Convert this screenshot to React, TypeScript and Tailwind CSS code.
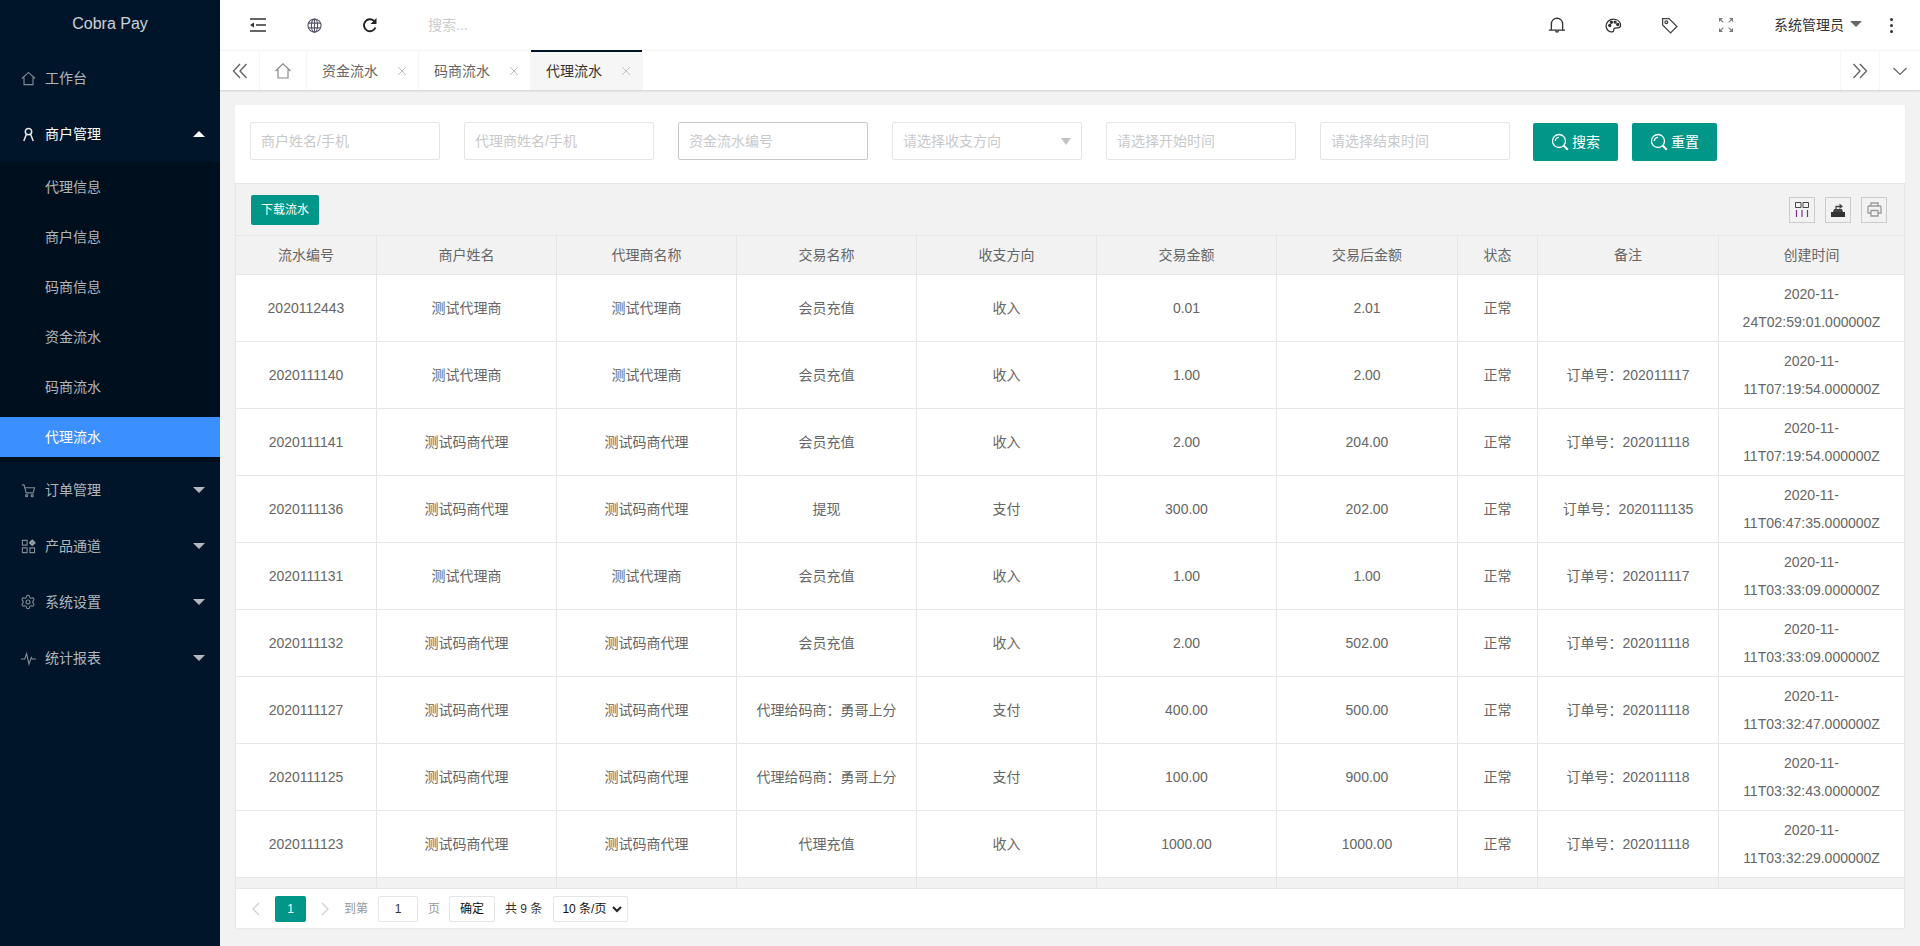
import React from 'react';
import { Settings } from 'lucide-react';

const subMenus = ['代理信息', '商户信息', '码商信息', '资金流水', '码商流水', '代理流水'];

const columns = [
  { title: '流水编号', width: 'w-[141px]' },
  { title: '商户姓名', width: 'w-[180px]' },
  { title: '代理商名称', width: 'w-[180px]' },
  { title: '交易名称', width: 'w-[180px]' },
  { title: '收支方向', width: 'w-[180px]' },
  { title: '交易金额', width: 'w-[180px]' },
  { title: '交易后金额', width: 'w-[181px]' },
  { title: '状态', width: 'w-[80px]' },
  { title: '备注', width: 'w-[181px]' },
  { title: '创建时间', width: 'w-[185px]' },
];

const rows = [
  ['2020112443', '测试代理商', '测试代理商', '会员充值', '收入', '0.01', '2.01', '正常', '', '2020-11-24T02:59:01.000000Z'],
  ['2020111140', '测试代理商', '测试代理商', '会员充值', '收入', '1.00', '2.00', '正常', '订单号：202011117', '2020-11-11T07:19:54.000000Z'],
  ['2020111141', '测试码商代理', '测试码商代理', '会员充值', '收入', '2.00', '204.00', '正常', '订单号：202011118', '2020-11-11T07:19:54.000000Z'],
  ['2020111136', '测试码商代理', '测试码商代理', '提现', '支付', '300.00', '202.00', '正常', '订单号：2020111135', '2020-11-11T06:47:35.000000Z'],
  ['2020111131', '测试代理商', '测试代理商', '会员充值', '收入', '1.00', '1.00', '正常', '订单号：202011117', '2020-11-11T03:33:09.000000Z'],
  ['2020111132', '测试码商代理', '测试码商代理', '会员充值', '收入', '2.00', '502.00', '正常', '订单号：202011118', '2020-11-11T03:33:09.000000Z'],
  ['2020111127', '测试码商代理', '测试码商代理', '代理给码商：勇哥上分', '支付', '400.00', '500.00', '正常', '订单号：202011118', '2020-11-11T03:32:47.000000Z'],
  ['2020111125', '测试码商代理', '测试码商代理', '代理给码商：勇哥上分', '支付', '100.00', '900.00', '正常', '订单号：202011118', '2020-11-11T03:32:43.000000Z'],
  ['2020111123', '测试码商代理', '测试码商代理', '代理充值', '收入', '1000.00', '1000.00', '正常', '订单号：202011118', '2020-11-11T03:32:29.000000Z'],
];

const Caret: React.FC<{ up?: boolean }> = ({ up }) =>
  up ? (
    <span className="h-0 w-0 border-x-[6px] border-b-[6px] border-x-transparent border-b-white" />
  ) : (
    <span className="h-0 w-0 border-x-[6px] border-t-[6px] border-x-transparent border-t-[#b3b9bf]" />
  );

const Icon: React.FC<{ size?: number; children: React.ReactNode; className?: string }> = ({ size = 16, children, className }) => (
  <svg width={size} height={size} viewBox="0 0 16 16" fill="none" stroke="currentColor" strokeWidth="1.2" className={className}>
    {children}
  </svg>
);

const menuIcons: Record<string, React.ReactNode> = {
  工作台: <Icon size={15}><path d="M1 8 8 1.500 15 8M3.200 7v7.500h9.600V7" /></Icon>,
  商户管理: <Icon size={15}><path d="M8 1.500a3.400 3.400 0 1 1 0 6.800 3.400 3.400 0 0 1 0-6.800ZM5.600 8 3 15M10.400 8 13 15" strokeWidth="1.600" /></Icon>,
  订单管理: (
    <Icon size={15}>
      <path d="M1 2h2.200L5.500 10.500h7.500L14.500 5H4" />
      <circle cx="6" cy="13.500" r="1.100" />
      <circle cx="12" cy="13.500" r="1.100" />
    </Icon>
  ),
  产品通道: (
    <Icon size={15}>
      <path d="M1.500 1.500h5v5h-5zM1.500 9.500h5v5h-5zM9.500 9.500h5v5h-5z" />
      <path d="M12 1 15 4 12 7 9 4Z" fill="currentColor" />
    </Icon>
  ),
  系统设置: <Settings size={16} strokeWidth={1.6} />,
  统计报表: <Icon size={15}><path d="M0 8.500h4L6 3l2.500 11L11 7l1 1.500h4" /></Icon>,
};

const MenuItem: React.FC<{ name: string; open?: boolean; arrow?: boolean }> = ({ name, open, arrow = true }) => (
  <div className={`flex h-[56px] items-center pl-[20px] pr-[15px] text-sm ${open ? 'text-white' : 'text-white/70'}`}>
    <span className={`mr-[9px] flex w-[16px] justify-center ${open ? 'text-white/90' : 'text-white/50'}`}>{menuIcons[name]}</span>
    <span className="flex-1">{name}</span>
    {arrow && <Caret up={open} />}
  </div>
);

const Sidebar = () => (
  <aside className="w-[220px] shrink-0 bg-[#001529]">
    <div className="flex h-[50px] items-center justify-center pb-[2px] text-base text-white/80">Cobra Pay</div>
    <MenuItem name="工作台" arrow={false} />
    <MenuItem name="商户管理" open />
    <div className="bg-[#000f1d]">
      {subMenus.map((name) => (
        <div key={name} className="h-[50px] py-[5px]">
          <div
            className={`flex h-[40px] items-center pl-[45px] text-sm ${
              name === '代理流水' ? 'bg-[#3b8fff] text-white' : 'text-white/70'
            }`}
          >
            {name}
          </div>
        </div>
      ))}
    </div>
    <MenuItem name="订单管理" />
    <MenuItem name="产品通道" />
    <MenuItem name="系统设置" />
    <MenuItem name="统计报表" />
  </aside>
);

const TopBar = () => (
  <header className="flex h-[50px] items-center bg-white text-[#333]">
    <div className="ml-[30px] flex w-[16px] justify-center">
      <Icon size={16}>
        <path d="M0 2h16M6 8h10M0 14h16" strokeWidth="1.600" />
        <path d="M0 8 4 5.500v5Z" fill="currentColor" stroke="none" />
      </Icon>
    </div>
    <div className="ml-[40px] flex w-[16px] justify-center text-[#556]">
      <Icon size={15}>
        <circle cx="8" cy="8" r="7" />
        <ellipse cx="8" cy="8" rx="3.300" ry="7" />
        <path d="M8 1v14M1.200 5.500h13.600M1.200 10.500h13.600" />
      </Icon>
    </div>
    <div className="ml-[40px] flex w-[16px] justify-center text-[#222]">
      <Icon size={16}>
        <path d="M13.500 10.500A6 6 0 1 1 12 3.800" strokeWidth="1.900" />
        <path d="M14.500 1v6h-6Z" fill="currentColor" stroke="none" />
      </Icon>
    </div>
    <span className="ml-[50px] text-sm text-[#ccc]">搜索...</span>
    <div className="ml-auto flex items-center">
      <Icon size={18} className="text-[#333]">
        <path d="M3 12.500V7a5 5 0 0 1 10 0v5.500M.8 12.500h14.400" />
        <path d="M6.800 12.800c0 2 2.400 2 2.400 0" />
      </Icon>
      <Icon size={17} className="ml-[39px] text-[#333]">
        <path d="M8 2C4 2 1 5 1 8.500S4 14.500 7 14c1.800-.4 1-2 1.500-3 .6-1 2.500-.5 4-.8 2-.4 2.500-2 2-3.700C13.800 4 11 2 8 2Z" />
        <circle cx="4.500" cy="8" r="1" fill="currentColor" />
        <circle cx="6" cy="5" r="1" fill="currentColor" />
        <circle cx="9.500" cy="4.800" r="1" fill="currentColor" />
        <circle cx="12" cy="7" r="1" fill="currentColor" />
      </Icon>
      <Icon size={17} className="ml-[39px] text-[#444]">
        <path d="M1.500 1.500h6l7.500 7.500-6 6-7.500-7.500Z" />
        <circle cx="5" cy="5" r="1.300" />
      </Icon>
      <Icon size={14} className="ml-[41px] text-[#777]">
        <path d="M0 4.500V0h4.500ZM16 4.500V0h-4.500ZM0 11.500V16h4.500ZM16 11.500V16h-4.500Z" fill="currentColor" stroke="none" />
        <path d="m1 1 4 4M15 1l-4 4M1 15l4-4M15 15l-4-4" />
      </Icon>
      <span className="ml-[41px] text-sm text-[#333]">系统管理员</span>
      <span className="ml-[6px] mt-[-2px] h-0 w-0 border-x-[6px] border-t-[6px] border-x-transparent border-t-[#666]" />
      <span className="ml-[28px] mr-[27px] flex flex-col gap-[3px]">
        <i className="size-[3px] rounded-full bg-[#333]" />
        <i className="size-[3px] rounded-full bg-[#333]" />
        <i className="size-[3px] rounded-full bg-[#333]" />
      </span>
    </div>
  </header>
);

const Close = () => (
  <svg width="10" height="10" viewBox="0 0 10 10" stroke="#c2c2c2" strokeWidth="1" className="ml-[19px]">
    <path d="m1 1 8 8M9 1 1 9" />
  </svg>
);

const TabsBar = () => (
  <div className="relative flex h-[40px] items-stretch border-t border-[#f6f6f6] bg-white shadow-[0_1px_2px_0_rgba(0,0,0,0.15)]">
    <div className="flex w-[40px] items-center justify-center border-r border-[#f6f6f6] text-[#666]">
      <Icon size={16}>
        <path d="M8 1 1.500 8 8 15M14.500 1 8 8l6.500 7" strokeWidth="1.400" />
      </Icon>
    </div>
    <div className="flex w-[47px] items-center justify-center border-r border-[#f6f6f6] text-[#888]">
      <Icon size={16}>
        <path d="M.5 8 8 .8 15.500 8M3 6.500V15h10V6.500" />
      </Icon>
    </div>
    {['资金流水', '码商流水', '代理流水'].map((tab) => (
      <div
        key={tab}
        className={`flex w-[112px] items-center justify-center border-r border-[#f6f6f6] pl-[4px] text-sm ${
          tab === '代理流水'
            ? 'relative bg-[#f6f6f6] text-[#333] before:absolute before:inset-x-0 before:top-[-1px] before:h-[2px] before:bg-[#001529]'
            : 'text-[#666]'
        }`}
      >
        {tab}
        <Close />
      </div>
    ))}
    <div className="ml-auto flex w-[40px] items-center justify-center border-x border-[#f6f6f6] text-[#666]">
      <Icon size={16}>
        <path d="M1.500 1 8 8l-6.500 7M8 1l6.500 7L8 15" strokeWidth="1.400" />
      </Icon>
    </div>
    <div className="flex w-[40px] items-center justify-center text-[#666]">
      <Icon size={16}>
        <path d="m1.500 5 6.500 6.500L14.500 5" />
      </Icon>
    </div>
  </div>
);

const FieldBox: React.FC<{ text: string; focused?: boolean; select?: boolean }> = ({ text, focused, select }) => (
  <div
    className={`flex h-[38px] w-[190px] items-center justify-between rounded-[2px] border bg-white pl-[10px] pr-[10px] text-sm text-[#c9c9c9] ${
      focused ? 'border-[#c9c9c9]' : 'border-[#e6e6e6]'
    }`}
  >
    {text}
    {select && <span className="h-0 w-0 border-x-[5px] border-t-[7px] border-x-transparent border-t-[#c2c2c2]" />}
  </div>
);

const SearchIcon = () => (
  <svg width="18" height="18" viewBox="0 0 18 18" fill="none" stroke="currentColor" strokeWidth="1.300">
    <circle cx="8" cy="8" r="6.500" />
    <path d="M4.300 8A3.700 3.700 0 0 1 8 4.300" />
    <path d="m12.800 12.800 4 4" strokeWidth="2" />
  </svg>
);

const SearchButton: React.FC<{ label: string }> = ({ label }) => (
  <button className="mt-px flex h-[38px] w-[85px] items-center justify-center gap-[3px] rounded-[2px] bg-[#009688] text-sm text-white">
    <SearchIcon />
    {label}
  </button>
);

const ToolButton: React.FC<{ children: React.ReactNode }> = ({ children }) => (
  <div className="flex size-[26px] items-center justify-center border border-[#ccc]">{children}</div>
);

const Pagination = () => (
  <div className="flex h-[40px] items-start border-x border-t border-[#e6e6e6] bg-white pl-[15px] pt-[7px] text-xs">
    <span className="flex h-[26px] w-[24px] items-center justify-start text-[#d2d2d2]">
      <svg width="10" height="14" viewBox="0 0 10 14" fill="none" stroke="currentColor" strokeWidth="1.300">
        <path d="M8 1 2 7l6 6" />
      </svg>
    </span>
    <span className="flex h-[26px] w-[31px] items-center justify-center rounded-[2px] bg-[#009688] text-white">1</span>
    <span className="ml-[7px] flex h-[26px] w-[24px] items-center justify-center text-[#d2d2d2]">
      <svg width="10" height="14" viewBox="0 0 10 14" fill="none" stroke="currentColor" strokeWidth="1.300">
        <path d="m2 1 6 6-6 6" />
      </svg>
    </span>
    <span className="ml-[7px] leading-[26px] text-[#999]">到第</span>
    <span className="ml-[10px] flex h-[26px] w-[40px] items-center justify-center rounded-[2px] border border-[#e6e6e6] text-[#333]">1</span>
    <span className="ml-[10px] leading-[26px] text-[#999]">页</span>
    <span className="ml-[9px] flex h-[26px] w-[46px] items-center justify-center rounded-[2px] border border-[#e6e6e6] text-[#111]">确定</span>
    <span className="ml-[10px] leading-[26px] text-[#333]">共 9 条</span>
    <span className="ml-[11px] flex h-[26px] w-[75px] items-center justify-between rounded-[2px] border border-[#e6e6e6] pl-[8px] pr-[5px] text-[#111]">
      10 条/页
      <svg width="10" height="7" viewBox="0 0 10 7" fill="none" stroke="#222" strokeWidth="2">
        <path d="m1 1 4 4 4-4" />
      </svg>
    </span>
  </div>
);

const DataTable = () => (
  <table className="w-[1668px] table-fixed border-separate border-spacing-0 text-center text-sm text-[#666]">
    <colgroup>
      {columns.map((col) => (
        <col key={col.title} className={col.width} />
      ))}
    </colgroup>
    <thead>
      <tr className="h-[39px] bg-[#f2f2f2]">
        {columns.map((col) => (
          <th key={col.title} className="border-b border-r border-[#e6e6e6] font-normal last:border-r-0">
            {col.title}
          </th>
        ))}
      </tr>
    </thead>
    <tbody>
      {rows.map((row) => (
        <tr key={row[0]} className="h-[67px] bg-white">
          {row.map((cell, i) => (
            <td key={i} className="border-b border-r border-[#e6e6e6] px-[15px] leading-[28px] last:border-r-0">
              {cell}
            </td>
          ))}
        </tr>
      ))}
      <tr className="h-[10px] bg-[#f2f2f2]">
        {columns.map((col) => (
          <td key={col.title} className="border-r border-[#e6e6e6] last:border-r-0" />
        ))}
      </tr>
    </tbody>
  </table>
);

const App = () => (
  <div className="flex h-[946px] w-[1920px] overflow-hidden bg-[#f2f2f2] font-['Liberation_Sans','Noto_Sans_CJK_SC',sans-serif]">
    <Sidebar />
    <main className="flex-1">
      <TopBar />
      <TabsBar />
      <section className="ml-[15px] mt-[15px] w-[1670px] rounded-[2px] bg-white shadow-[0_1px_2px_0_rgba(0,0,0,0.05)]">
        <div className="flex h-[78px] items-start gap-[24px] pl-[15px] pt-[17px]">
          <FieldBox text="商户姓名/手机" />
          <FieldBox text="代理商姓名/手机" />
          <FieldBox text="资金流水编号" focused />
          <FieldBox text="请选择收支方向" select />
          <FieldBox text="请选择开始时间" />
          <FieldBox text="请选择结束时间" />
          <div className="ml-[-1px] flex gap-[14px]">
            <SearchButton label="搜索" />
            <SearchButton label="重置" />
          </div>
        </div>
        <div className="flex h-[53px] items-center justify-between border border-[#e6e6e6] bg-[#f2f2f2] pl-[15px] pr-[17px]">
          <button className="h-[30px] w-[68px] rounded-[2px] bg-[#009688] text-xs text-white">下载流水</button>
          <div className="flex gap-[10px]">
            <ToolButton>
              <svg width="14" height="15" viewBox="0 0 14 15" fill="none" stroke="#444" strokeWidth="1">
                <path d="M.5.500h5.500v5H.5zM8 .5h5.500v5H8z" />
                <path d="M1.500 8v7M7 8v7M12.500 8v7" stroke="#7b2d8b" strokeWidth="1.200" />
              </svg>
            </ToolButton>
            <ToolButton>
              <svg width="14" height="14" viewBox="0 0 14 14">
                <path d="M0 9h14v5H0Z" fill="#333" />
                <path d="M2 9 3 6h8l1 3" fill="#444" />
                <path d="M5 6V3.500h4" fill="none" stroke="#444" strokeWidth="1.300" />
                <path d="M8.500 .5 12 3.500 8.500 6Z" fill="#444" />
              </svg>
            </ToolButton>
            <ToolButton>
              <svg width="15" height="15" viewBox="0 0 15 15" fill="none" stroke="#999" strokeWidth="1.300">
                <path d="M4 4V1h7v3M4 11H1V5a1 1 0 0 1 1-1h11a1 1 0 0 1 1 1v6h-3" />
                <path d="M4 8.500h7V14H4Z" />
              </svg>
            </ToolButton>
          </div>
        </div>
        <div className="border-x border-[#e6e6e6]">
          <DataTable />
        </div>
        <Pagination />
      </section>
    </main>
  </div>
);

export default App;
